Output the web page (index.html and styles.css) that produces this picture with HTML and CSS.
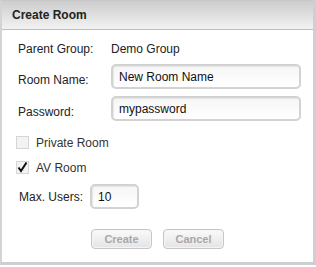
FILE: index.html
```html
<!DOCTYPE html>
<html>
<head>
<meta charset="utf-8">
<link rel="stylesheet" href="styles.css">
</head>
<body>
<div class="dialog">
  <div class="titlebar">Create Room</div>
  <div class="body">
    <div class="row info">
      <span class="label">Parent Group:</span>
      <span class="value">Demo Group</span>
    </div>
    <div class="row">
      <span class="label">Room Name:</span>
      <div class="input wide">New Room Name</div>
    </div>
    <div class="row">
      <span class="label">Password:</span>
      <div class="input wide">mypassword</div>
    </div>
    <div class="check first">
      <span class="box"></span>
      <span class="ctext">Private Room</span>
    </div>
    <div class="check">
      <span class="box"><svg width="13" height="13" viewBox="0 0 13 13"><path d="M2.5 6.5 L5 10 L10.5 1.5" fill="none" stroke="#111" stroke-width="2"/></svg></span>
      <span class="ctext">AV Room</span>
    </div>
    <div class="row max">
      <span class="label short">Max. Users:</span>
      <div class="input small">10</div>
    </div>
    <div class="buttons">
      <div class="btn">Create</div>
      <div class="btn">Cancel</div>
    </div>
  </div>
</div>
</body>
</html>
```
FILE: styles.css
```css
html, body {
  margin: 0;
  padding: 0;
  background: #ffffff;
}
body {
  font-family: "Liberation Sans", Arial, sans-serif;
  font-size: 12px;
  color: #222;
}
.dialog {
  border-left: 2px solid #d4d4d4;
  border-right: 3px solid #cfcfcf;
  border-bottom: 3px solid #cfcfcf;
  border-top: 1px solid #c8c8c8;
  box-sizing: border-box;
  width: 316px;
  height: 265px;
  display: flex;
  flex-direction: column;
}
.titlebar {
  height: 29px;
  box-sizing: border-box;
  padding: 7px 0 0 10px;
  font-weight: bold;
  font-size: 12px;
  color: #222;
  background: linear-gradient(#cdcdcd, #f2f2f2);
  border-bottom: 1px solid #bdbdbd;
}
.body {
  flex: 1;
  background: #fff;
  padding: 10px 0 0 16px;
}
.row {
  display: flex;
  align-items: center;
}
.row.info {
  height: 18px;
  margin-bottom: 6px;
}
.label {
  width: 93px;
}
.input {
  box-sizing: border-box;
  height: 25px;
  border: 2px solid #d2d2d2;
  border-radius: 5px;
  background: linear-gradient(#f6f6f6, #ffffff);
  box-shadow: inset 1px 1px 1px #e6e6e6;
  padding: 4px 0 0 6px;
  color: #111;
  font-size: 12px;
}
.input.wide {
  width: 190px;
  margin-bottom: 7px;
}
.check {
  display: flex;
  align-items: center;
  height: 13px;
  margin-left: -2px;
  margin-bottom: 12px;
}
.check.first {
  margin-top: 8px;
}
.box {
  width: 13px;
  height: 13px;
  box-sizing: border-box;
  border: 1px solid #d6d6d6;
  background: #f3f3f3;
  margin-right: 7px;
  position: relative;
}
.box svg {
  position: absolute;
  left: -1px;
  top: -1px;
}
.ctext {
  color: #333;
}
.row.max {
  margin-top: -2px;
}
.label.short {
  width: 71px;
  margin-left: 1px;
}
.input.small {
  width: 49px;
}
.buttons {
  display: flex;
  gap: 11px;
  margin-top: 20px;
  margin-left: 73px;
}
.btn {
  box-sizing: border-box;
  width: 61px;
  height: 20px;
  border: 1px solid #c6c6c6;
  border-radius: 4px;
  background: linear-gradient(#fafafa, #e4e4e4);
  box-shadow: inset 0 0 0 1px #f4f4f4;
  color: #a8a8a8;
  font-weight: bold;
  font-size: 11px;
  text-align: center;
  line-height: 18px;
}
```
